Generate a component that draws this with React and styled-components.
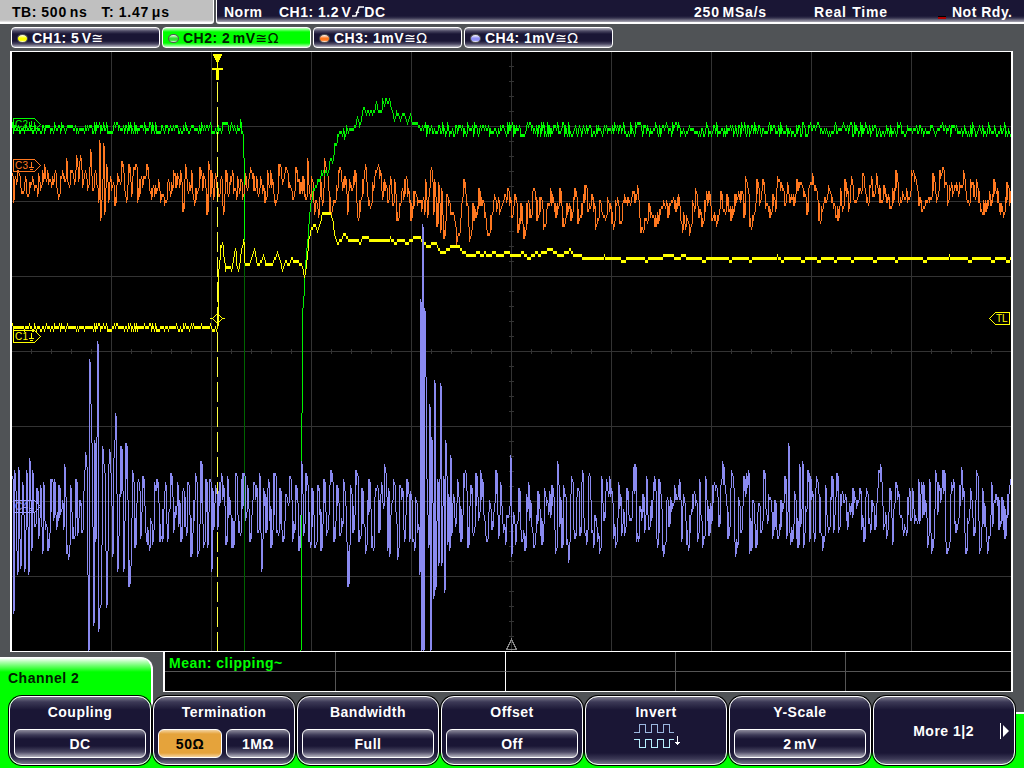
import React from 'react';
import styled, { createGlobalStyle } from 'styled-components';

const GlobalStyle = createGlobalStyle`
	* { box-sizing: border-box; }
	body {
		margin: 0;
		background: #505356;
		overflow: hidden;
	}
`;

const Screen = styled.div`
	width: 1024px;
	height: 768px;
	display: flex;
	flex-direction: column;
	background: #505356;
	color: #fff;
	font: bold 14px/16px "Liberation Sans", Arial, sans-serif;
	letter-spacing: 0.5px;
	white-space: pre;
	overflow: hidden;
`;

/* ---------- top bar ---------- */

const TopBar = styled.div`
	display: flex;
	gap: 2px;
	height: 24px;
	margin-bottom: 3px;
`;

const TimeBase = styled.div`
	display: flex;
	gap: 14px;
	width: 214px;
	padding: 4px 0 0 12px;
	color: #000;
	background: linear-gradient(#c0c0c0 20px, #eee 22px);
	border-right: 1px solid #fff;
	border-bottom: 2px solid #fff;
	border-radius: 0 0 3px 0;
`;

const Status = styled.div`
	flex: 1;
	display: grid;
	grid-template-columns: 55px 415px 120px 124px 14px auto;
	padding: 4px 0 0 7px;
	background: linear-gradient(#1a1635 16px, #35324e 18px, #a9a8b4 22px);
	border-left: 1px solid #fff;
	border-bottom: 2px solid #fff;
	border-radius: 0 0 0 3px;
`;

const Value = styled.span`
	word-spacing: -2px;
	letter-spacing: ${p => p.$wide ? '0.8px' : 'inherit'};
`;

const Led = styled.i`
	width: 8px;
	height: 3px;
	margin-top: 12px;
	background: #000;
	border-bottom: 2px solid #b00000;
`;

/* ---------- channel tabs ---------- */

const Channels = styled.div`
	display: flex;
	gap: 2px;
	height: 21px;
	padding-left: 11px;
	margin-bottom: 3px;
`;

const Channel = styled.div`
	display: flex;
	align-items: center;
	width: 149px;
	height: 21px;
	padding: 1px 0 0 5px;
	border: 1px solid #fff;
	border-radius: 4px;
	color: ${p => p.$active ? '#002000' : '#fff'};
	background: ${p => p.$active
		? 'linear-gradient(#c8ffc8, #00ff00 4px, #00ff00 15px, #c8ffc8)'
		: 'linear-gradient(#b5b4c0, #4c4964 3px, #1a1635 6px, #1a1635 13px, #4c4964 16px, #b5b4c0)'};
`;

const Dot = styled.i`
	width: 11px;
	height: 9px;
	margin-right: 4px;
	border: 1px solid #555;
	border-radius: 50%;
	background: linear-gradient(#fff, ${p => p.$color} 45%, ${p => p.$color} 75%, #fff);
`;

const Symbols = styled.span`
	font: 14px/16px "DejaVu Sans", sans-serif;
	letter-spacing: 0.5px;
`;

/* ---------- graticule ---------- */

const Plot = styled.div`
	width: 1003px;
	height: 601px;
	margin-left: 10px;
	background: #000;
	border: solid #fff;
	border-width: 1px 2px;
`;

const PlotSvg = styled.svg`
	display: block;
	width: 999px;
	height: 599px;
	shape-rendering: crispEdges;
	fill: none;
	letter-spacing: 0;
`;

/* ---------- bottom ---------- */

const Bottom = styled.div`
	display: flex;
	justify-content: space-between;
	height: 43px;
	padding-right: 11px;
`;

const ChannelTitle = styled.div`
	width: 153px;
	height: 38px;
	margin-top: 5px;
	padding: 12px 0 0 8px;
	color: #002000;
	background: linear-gradient(#fff, #b0ffb0 4px, #00ff00 14px);
	border-top: 1px solid #fff;
	border-right: 2px solid #fff;
	border-radius: 0 12px 0 0;
`;

const Measures = styled.div`
	display: grid;
	grid-template-columns: 171px 170px 170px 170px 1fr;
	grid-template-rows: 20px 19px;
	width: 850px;
	height: 41px;
	margin-top: -1px;
	background: #000;
	border: solid #fff;
	border-width: 1px 2px 1px 2px;
	color: #00ff00;
`;

const Measure = styled.div`
	padding: 3px 0 0 4px;
	border-right: ${p => p.$last ? '0' : `1px solid ${p.$mid ? '#fff' : '#555'}`};
	border-bottom: ${p => p.$row === 0 ? '1px solid #555' : '0'};
`;

const Menu = styled.div`
	display: flex;
	gap: 2px;
	height: 73px;
	padding: 1px 0 0 9px;
	background:
		linear-gradient(#00ff00, #00ff00) 0 0 / 151px 100% no-repeat,
		linear-gradient(#fff, #fff) 151px 0 / 2px 17px no-repeat,
		linear-gradient(#505356 17px, #fff 17px, #fff 19px, #00ff00 19px);
`;

const MenuButton = styled.div`
	display: flex;
	flex-direction: column;
	align-items: center;
	width: 142px;
	height: 69px;
	padding: 7px 4px 0;
	border: 1px solid #fff;
	border-radius: 13px;
	box-shadow: 0 0 0 1px #000;
	background: linear-gradient(#7b798d, #3c3956 5px, #1a1635 13px, #1a1635 56px, #3c3956 62px, #7b798d);
`;

const Options = styled.div`
	display: flex;
	gap: 4px;
	width: 132px;
	margin-top: 9px;
`;

const Option = styled.div`
	flex: 1;
	height: 29px;
	padding: 6px 0 0;
	text-align: center;
	border: 1px solid #fff;
	border-radius: 6px;
	color: ${p => p.$on ? '#000' : '#fff'};
	background: ${p => p.$on
		? 'linear-gradient(#f3d3a0, #e5a33b 4px, #e5a33b 23px, #f3d3a0)'
		: 'linear-gradient(#8d8b9c, #3c3956 5px, #1a1635 9px, #1a1635 16px, #4c4964 22px, #b5b4c0)'};
`;

const More = styled.div`
	display: flex;
	align-items: center;
	align-self: flex-end;
	gap: 26px;
	margin: 19px 0 0 0;
`;

/* ---------- trace data: x y pairs ---------- */

const C1 = `217 328 218 270 219 262 220 245 222 244 223 255 225 269 228 267 231 269 235 248 236 265 238 269 241 250 243 239 244 262
246 265 250 262 254 250 256 262 259 265 263 254 265 264 269 264 273 262 277 251 280 262 282 270 285 261 289 264 291 257 294 262
297 260 301 265 304 275 306 262 308 240 311 228 314 224 317 230 320 222 322 212 326 214 328 214 330 212 332 220 334 235 337 242
341 240 343 233 346 236 349 241 355 241 358 241 360 244 362 238 364 236 367 236 370 241 375 240 388 240 390 237 392 240 395 243
398 240 404 240 406 243 410 240 415 237 420 237 424 243
428 247 432 242 436 244 441 253 446 250 451 246 459 247 464 253 472 255 474 256 477 252 482 255 484 252 488 255 494 252 498 255
508 252 512 255 518 255 522 252 525 255 528 258 532 255 536 252 539 255 542 252 551 249
555 253 560 255 567 252 570 249 573 255 580 254 582 258 602 258 604 255 606 258 620 258 622 261 628 258 640 258 646 260 650 258
661 258 664 255 672 255 676 258 684 255 688 258 700 258 703 261 707 258 728 258 730 261
732 258 748 258 750 261 753 258 776 258 777 254 778 258 780 258 782 261 785 258 800 258 802 261 806 258 815 258 818 261 822 258
833 258 835 261 838 258 850 258 852 261 855 258
872 258 874 261 878 258 893 258 896 261 899 258 921 258 924 261 928 258 948 258 949 255 951 258 966 258 969 261 973 258 990 258
992 261 996 258 1004 258 1007 261 1011 258`;

const C2 = `239 128 240 121 241 131 242 133 243 157 244 240 245 240`;
const C2Rise = `300 651 301 415 302 310 303 298 304 277 306 250 308 225 310 205 311 200 313 188 316 185 318 180 320 177 321 171 325 172
328 170 330 158 332 163 334 145 336 143 339 131 341 132 343 130 344 138 346 128 351 128 354 126 357 118 359 125 361 117 363 107
366 113 370 112 373 111 375 104 379 112 381 111 382 98 384 105 386 98 388 101 391 107 394 119 396 110 400 120 403 113 407 122
410 115 412 122 416 122 420 127 425 128`;

const C3 = `12 175 13 201 15 178 18 172 20 187 23 192 25 178 27 194 30 183 32 178 35 186 37 195 38 173 40 190 42 172 43 180 44 165
46 180 50 180 52 178 54 175 56 185 58 198 60 178 62 170 65 180 66 160 68 182 71 172 73 178 75 172 76 155 78 180 80 157 82 185
84 175 86 178 88 185 90 151 92 190 94 175 96 182 98 201 99 142 100 219 102 180 103 145 104 213 106 165 108 200 110 178 112 185
115 204 117 175 119 180 122 163 124 190 126 201 129 166 131 195 133 168 136 166 137 201 140 180 144 177 147 166 149 190 152 188
156 192 158 180 160 201 162 195 165 201 167 183 169 190 172 190 173 172 176 185 178 178 180 172 183 210 185 165 187 190 190 190
191 171 193 198 196 190 200 169 202 190 204 178 207 213 208 163 210 195 211 172 213 198 215 175 219 195 221 178 223 213 226 172
228 195 231 178 235 190 238 185 240 180 243 195 245 175 247 190 251 170 254 190 256 178 258 195 260 176 262 192 265 200 267 178
272 180 276 200 279 166 283 180 286 169 290 187 293 198 296 169 300 192 303 178 306 198 307 160 309 193 312 180 314 214 316 200
318 215 320 180 322 205 324 158 326 172 330 211 334 200 340 169 342 190 345 178 347 214 349 180 352 190 355 172 357 215 360 200
363 180 364 170 366 180 369 205 373 190 375 180 380 172 381 190 385 188 388 202 390 178 392 205 394 181 397 220 400 205 405 181
408 190 411 218 414 200 419 200 422 200 424 212 425 181 427 216 429 190 431 169 433 212 434 180 437 226 438 182 440 232 441 190
444 238 446 195 449 200 453 212 455 225 456 242 459 235 461 205 464 181 467 205 469 240 473 205 476 215 479 190 482 205 485 215
488 235 491 215 493 200 497 205 500 205 505 195 508 190 512 215 515 195 518 232 521 205 524 238 527 205 530 215 534 190 537 218
540 198 544 226 548 205 552 195 556 215 560 190 563 226 567 205 571 218 575 190 578 222 582 205 585 187 588 210 592 195 596 226
600 200 604 215 608 200 612 222 616 205 620 215 625 200 628 205 635 200 637 187 641 231 645 220 649 205 653 215 656 225 660 210
664 203 668 215 672 200 676 210 679 203 681 222 684 223 687 220 690 228 693 203 696 193 699 215 702 225 705 200 709 193 711 220
715 218 718 215 721 193 724 210 727 196 731 215 736 193 741 193 744 215 745 178 746 180 750 225 753 215 757 181 759 205 763 181
765 202 770 216 773 195 775 210 777 178 781 182 785 205 787 184 790 200 794 205 797 181 800 182 804 195 807 213 809 185 813 183
816 190 819 219 822 210 826 200 829 188 832 197 838 219 840 190 842 210 845 181 849 205 851 185 856 200 860 190 863 175 867 200
870 185 874 195 876 175 880 200 884 185 887 200 891 207 896 172 898 195 903 200 908 198 912 175 915 178 919 205 922 210 926 200
930 198 933 175 937 198 940 172 942 169 944 185 948 200 950 188 953 192 957 190 960 185 964 178 968 200 971 185 974 195 976 181
979 200 984 213 988 200 991 205 994 181 998 200 1001 205 1004 213 1007 184 1009 203 1011 190`;

const C4 = `12 478 13 612 14 472 16 550 17 573 18 469 20 567 22 484 24 570 26 472 28 573 29 460 31 550 32 472 34 525 37 490 38 537
40 487 42 552 43 484 45 528 48 549 51 481 53 520 54 481 56 528 59 487 61 510 63 528 64 466 67 552 69 546 70 487 73 537 76 481
77 535 80 502 82 530 84 470 86 466 87 573 88 651 89 361 90 403 91 442 93 624 94 442 95 540 97 343 98 630 100 606 102 448 104 472
106 606 108 466 110 472 112 555 113 460 115 415 117 570 121 448 123 570 126 445 129 586 130 568 132 470 135 545 137 484 139 490
140 537 143 478 145 530 148 543 150 520 153 532 154 484 157 481 160 540 163 510 165 484 167 540 171 475 173 530 176 490 181 540
182 493 185 525 188 484 191 555 194 500 196 481 197 555 201 463 203 546 206 481 207 546 210 481 211 570 212 490 213 528 216 493
217 528 220 484 223 487 226 543 227 490 233 546 236 475 239 530 243 475 246 512 247 487 250 540 254 484 258 530 259 475 261 571
263 490 266 530 268 480 271 545 274 475 277 530 280 490 283 540 286 495 290 478 292 540 296 485 299 550 301 461 303 535 306 475
309 540 312 490 315 545 318 485 321 548 324 480 327 530 331 472 334 540 337 485 340 535 344 490 348 586 350 485 353 530 356 470
359 540 362 490 366 545 369 480 372 545 376 490 379 530 380 512 385 472 387 550 388 490 389 556 391 505 393 481 395 510 398 550
399 487 402 490 404 540 407 481 409 540 410 493 413 540 416 502 418 525 419 573 420 300 421 651 422 226 423 651 424 310 425 376
426 478 428 546 429 406 430 651 431 439 433 597 434 382 435 588 437 481 438 565 440 385 441 565 443 478 444 591 445 442 447 543
448 496 449 550 450 457 451 535 453 495 455 525 457 481 461 540 464 475 468 546 471 487 473 535 476 475 478 520 480 472 482 481
484 520 487 540 489 502 492 528 496 472 498 537 500 484 504 525 508 515 510 457 511 534 516 525 519 490 522 540 525 550 526 496
530 502 534 546 538 491 542 543 544 490 547 516 552 487 556 550 557 478 562 546 563 487 567 543 569 543 571 478 575 537 577 490
580 535 582 472 584 530 587 532 588 478 592 532 595 515 598 534 600 550 601 478 604 520 607 490 611 490 613 536 616 543 618 484
622 526 624 535 627 490 630 518 632 493 635 466 636 541 640 508 643 495 644 532 646 478 649 528 652 502 655 490 656 538 659 500
664 547 666 500 669 526 672 503 676 499 680 499 681 541 684 500 687 544 690 516 693 496 696 502 698 535 699 481 701 520 704 538
705 478 709 535 713 487 716 487 719 526 721 481 724 484 728 538 732 475 734 541 736 541 739 505 741 532 744 478 746 475 748 472
749 553 753 500 756 547 759 505 761 532 764 472 766 512 770 497 772 538 775 500 778 538 781 500 785 478 786 538 788 445 789 532
792 541 794 493 798 547 799 466 800 526 802 463 803 547 805 508 808 472 809 540 810 478 812 493 814 541 816 478 820 530 824 538
825 487 829 528 832 478 833 532 837 475 838 530 841 495 844 500 848 522 853 490 855 505 860 490 861 528 864 541 866 490 869 522
872 500 875 528 877 490 881 481 883 528 887 532 890 490 891 535 896 497 901 515 905 528 908 499 911 520 912 490 916 520 918 481
919 522 921 484 924 512 928 538 929 481 930 532 933 541 935 472 937 512 938 484 941 490 944 472 945 541 948 550 950 495 952 490
956 532 960 487 963 490 966 553 967 520 971 497 974 535 976 472 978 520 980 550 982 490 985 525 989 538 991 484 992 526 996 496
999 528 1002 499 1005 538 1008 496 1010 481 1011 525`;

// the scope paints one vertical bar per pixel column, in steps of 3px;
// with wide set, peaks that stand free get a bar two columns wide
const trace = (data, noise, wide) => {
	const n = data.trim().split(/\s+/).map(Number);
	let seed = 7;
	const rnd = () => {
		seed = (seed * 16807) % 2147483647;
		return seed / 2147483647 - 0.5;
	};
	const snap = (v) => Math.round(v / 3) * 3;
	let prev = snap(n[1]);
	let d = '';
	for (let i = 0; i < n.length - 2; i += 2) {
		const [x0, y0, x1, y1] = n.slice(i, i + 4);
		const free = i > 0 && x0 - n[i - 2] > 2;
		for (let x = x0; x < x1; x++) {
			const base = y0 + (y1 - y0) * (x - x0) / (x1 - x0);
			const y = snap(x === x0 && x1 - x0 < 5 ? base : base + rnd() * noise);
			// leave out the step that the previous column already covers
			const top = y > prev ? prev + 2 : y - 1;
			const bottom = y < prev ? prev - 1 : y + 2;
			d += `M${x + 0.5} ${top}V${bottom}`;
			if (wide && free && x === x0) d += `M${x - 0.5} ${top}V${bottom}`;
			prev = y;
		}
	}
	return d;
};

const verticals = [111, 211, 311, 411, 511, 611, 711, 811, 911];
const horizontals = [126, 201, 276, 351, 426, 501, 576];

const Graticule = () => {
	let d = '';
	verticals.forEach(x => { d += `M${x + 0.5} 52V651`; });
	horizontals.forEach(y => { d += `M12 ${y + 0.5}H1011`; });
	for (let x = 31; x < 1011; x += 20) d += `M${x + 0.5} 349V354`;
	for (let y = 66; y < 651; y += 15) d += `M509 ${y + 0.5}H514`;
	return <path d={d} stroke="#333" />;
};

const ChannelMark = ({ y, name, color }) => (
	<g stroke={color}>
		<path d={`M13.5 ${y + 0.5}H34.5L40.5 ${y + 6.5}L34.5 ${y + 12.5}H13.5Z`} />
		<path d={`M31.5 ${y + 3}V${y + 8}M29 ${y + 8.5}H34M30 ${y + 10.5}H33`} />
		<text x="15" y={y + 10} fill={color} stroke="none" fontSize="10" fontWeight="normal" textLength="13">{name}</text>
	</g>
);

const Scope = () => (
	<PlotSvg viewBox="12 52 999 599">
		<Graticule />
		<path d="M511.5 639.5L506.5 649.5H516.5Z" stroke="#888" />
		<path d={trace('12 128 239 128', 10)} stroke="#00ff00" />
		<path d={trace(C2, 0)} stroke="#00ff00" />
		<path d="M244.5 240V651" stroke="#006400" />
		<path d={trace(C3, 20, true)} stroke="#ff7820" />
		<path d={trace(C2Rise, 6)} stroke="#00f000" />
		<path d={trace('425 129 620 129 1011 130', 12)} stroke="#00ff00" />
		<path d="M217.5 82V651" stroke="#ffff40" strokeDasharray="20 5" />
		<path d={trace('12 327 217 327', 5)} stroke="#ffff00" />
		<path d={trace(C1, 0)} stroke="#ffff00" />
		<path d={trace(C4, 44, true)} stroke="#8a8af0" />
		<path d="M212 53.5H223L217.5 64Z" fill="#ffff00" />
		<path d="M217.5 62V69" stroke="#ffff00" />
		<path d="M212 69H223" stroke="#ffff00" strokeWidth="2" />
		<path d="M217.5 68V80" stroke="#ffff00" strokeWidth="3" />
		<path d="M217.5 313.5L222.5 318.5L217.5 323.5L212.5 318.5ZM210 318.5H213M222 318.5H225" stroke="#ffff00" />
		<ChannelMark y={118} name="C2" color="#00ff00" />
		<ChannelMark y={159} name="C3" color="#ff7820" />
		<ChannelMark y={330} name="C1" color="#ffff00" />
		<ChannelMark y={500} name="C4" color="#9898ff" />
		<path d="M1009.5 312.5H995.5L989.5 318.5L995.5 324.5H1009.5Z" stroke="#ffff00" />
		<text x="996" y="322" fill="#ffff00" fontSize="10" fontWeight="normal">TL</text>
	</PlotSvg>
);

const EdgeSvg = styled.svg`
	margin: 0 0 0 1px;
`;

const RisingEdge = () => (
	<EdgeSvg width="12" height="11" viewBox="0 0 12 11" fill="none" stroke="#fff">
		<path d="M0 10H4L7 1H12" strokeWidth="1.5" />
		<path d="M3 7L5.5 4.5L7.5 7Z" fill="#fff" stroke="none" />
	</EdgeSvg>
);

const InvertSvg = styled.svg`
	margin: 1px 0 0 3px;
`;

const InvertIcon = () => (
	<InvertSvg width="50" height="28" viewBox="0 0 50 28" fill="none" shapeRendering="crispEdges">
		<path d="M1 11.5H6.5V3.5H12.5V11.5H18.5V3.5H24.5V11.5H30.5V3.5H36.5V11.5H41" stroke="#9cb8e0" />
		<path d="M1 18.5H6.5V26.5H12.5V18.5H18.5V26.5H24.5V18.5H30.5V26.5H36.5V18.5H41" stroke="#b8f0ff" />
		<path d="M44.5 15V24M42 21.5H47M43 22.5H46" stroke="#fff" />
	</InvertSvg>
);

const MoreArrow = () => (
	<svg width="10" height="16" viewBox="0 0 10 16">
		<path d="M0.5 0V16" stroke="#fff" />
		<path d="M3 2L9 8L3 14Z" fill="#fff" />
	</svg>
);

const channels = [
	{ name: 'CH1:', value: '5 V', symbols: '≅', color: '#ffff00' },
	{ name: 'CH2:', value: '2 mV', symbols: '≅Ω', color: '#30e030', active: true },
	{ name: 'CH3:', value: '1mV', symbols: '≅Ω', color: '#ff7820' },
	{ name: 'CH4:', value: '1mV', symbols: '≅Ω', color: '#9090f8' },
];

const menu = [
	{ title: 'Coupling', options: ['DC'] },
	{ title: 'Termination', options: ['50Ω', '1MΩ'], on: 0 },
	{ title: 'Bandwidth', options: ['Full'] },
	{ title: 'Offset', options: ['Off'] },
	{ title: 'Invert', icon: <InvertIcon /> },
	{ title: 'Y-Scale', options: ['2 mV'] },
];

const App = () => {
	return (
		<>
			<GlobalStyle />
			<Screen>
				<TopBar>
					<TimeBase>
						<span>TB: <Value $wide>500 ns</Value></span>
						<span>T: <Value $wide>1.47 μs</Value></span>
					</TimeBase>
					<Status>
						<span>Norm</span>
						<span>CH1: <Value>1.2 V</Value><RisingEdge />DC</span>
						<Value $wide>250 MSa/s</Value>
						<Value $wide>Real  Time</Value>
						<Led />
						<span>Not Rdy.</span>
					</Status>
				</TopBar>

				<Channels>
					{channels.map(c => (
						<Channel key={c.name} $active={c.active}>
							<Dot $color={c.color} />
							<span>{c.name} <Value>{c.value}</Value></span>
							<Symbols>{c.symbols}</Symbols>
						</Channel>
					))}
				</Channels>

				<Plot><Scope /></Plot>

				<Bottom>
					<ChannelTitle>Channel 2</ChannelTitle>
					<Measures>
						{[0, 1].map(row => [0, 1, 2, 3, 4].map(col => (
							<Measure key={`${row}-${col}`} $row={row} $mid={col === 1} $last={col === 4}>
								{row === 0 && col === 0 ? 'Mean: clipping~' : ''}
							</Measure>
						)))}
					</Measures>
				</Bottom>

				<Menu>
					{menu.map(m => (
						<MenuButton key={m.title}>
							<span>{m.title}</span>
							{m.icon}
							{m.options && (
								<Options>
									{m.options.map((o, i) => (
										<Option key={o} $on={m.on === i}><Value>{o}</Value></Option>
									))}
								</Options>
							)}
						</MenuButton>
					))}
					<MenuButton>
						<More><span>More 1|2</span><MoreArrow /></More>
					</MenuButton>
				</Menu>
			</Screen>
		</>
	);
};

export default App;
